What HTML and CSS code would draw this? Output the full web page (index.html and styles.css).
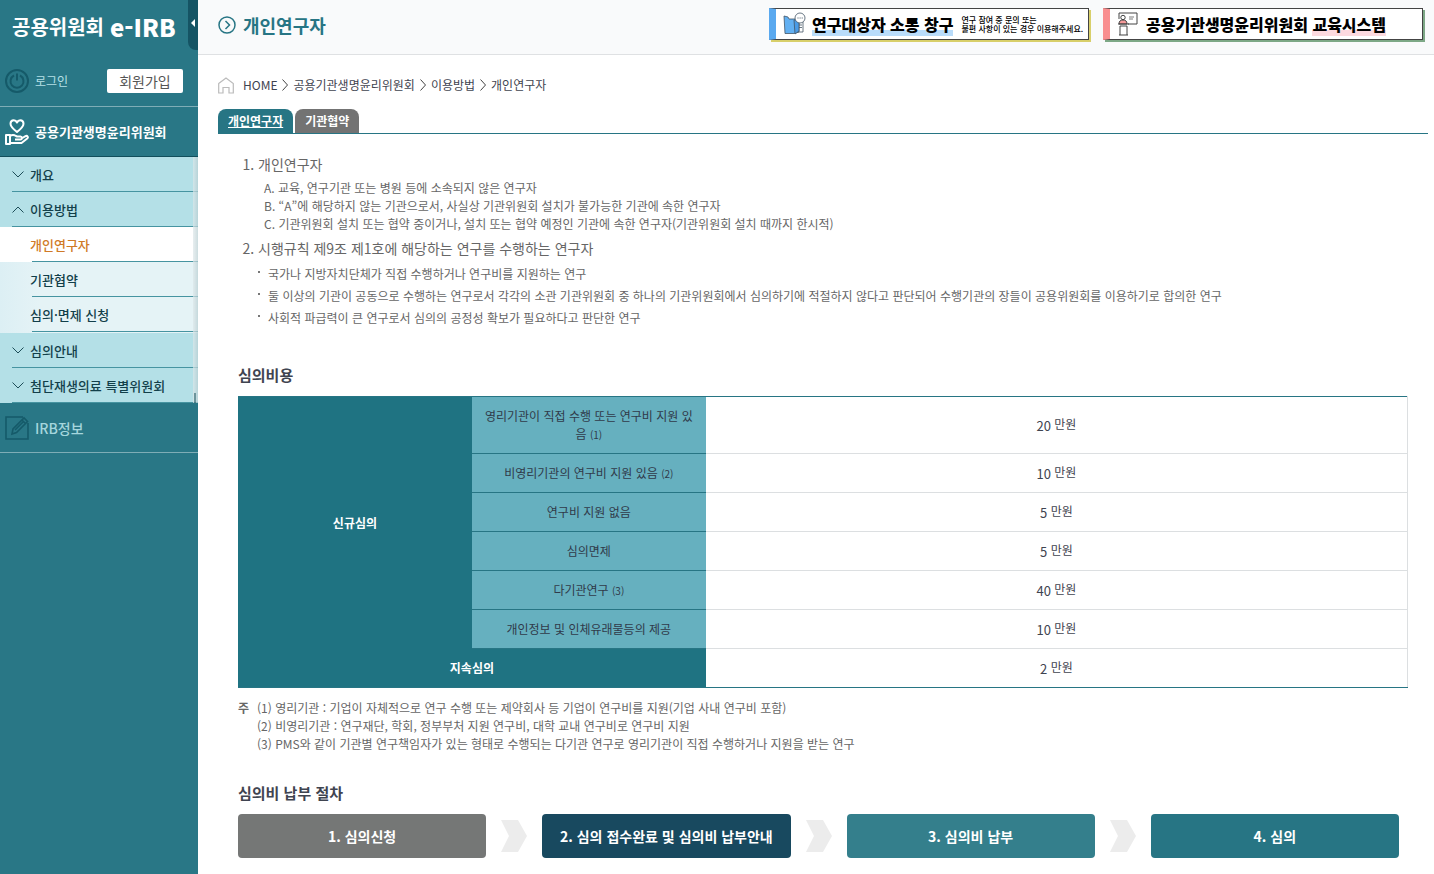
FILE: index.html
```html
<!DOCTYPE html>
<html lang="ko">
<head>
<meta charset="utf-8">
<title>개인연구자 - 공용위원회 e-IRB</title>
<link rel="stylesheet" href="styles.css">
</head>
<body>
<div class="layout">
  <aside class="sidebar">
    <a class="logo" href="#">공용위원회 <strong>e-IRB</strong></a>
    <button class="fold" type="button" aria-label="메뉴 접기"><svg width="4" height="8" viewBox="0 0 4 8"><path d="M4 0v8L0 4z" fill="#fff"/></svg></button>
    <div class="account">
      <a class="login" href="#">
        <svg width="24" height="24" viewBox="0 0 24 24" fill="none" stroke="#155a69" stroke-width="2"><circle cx="12" cy="12" r="11"/><path d="M9 6.500a6.500 6.500 0 1 0 6 0M12 4.500v7"/></svg>
        로그인</a>
      <button class="join" type="button">회원가입</button>
    </div>
    <a class="section current" href="#">
      <svg width="24" height="26" viewBox="0 0 24 26" fill="none" stroke="#fff" stroke-width="2" stroke-linejoin="round"><path d="M12 13C7.500 9.500 5.500 7.400 5.500 4.800 5.500 2.700 7 1.300 8.800 1.300c1.400 0 2.600.8 3.200 2.200.6-1.400 1.800-2.200 3.200-2.200 1.800 0 3.300 1.400 3.300 3.500 0 2.600-2 4.700-6.500 8.200z"/><path d="M1 16h4v9H1zM5 17c2-1.300 4-1.300 6 0l1 .5h3.500c1.800 0 1.800 3 0 3H10M16.500 19.500l4-2.300c1.800-1 3.200 1 1.700 2.300L16.500 24H5"/></svg>
      공용기관생명윤리위원회</a>
    <nav class="menu">
      <a class="item" href="#"><svg class="chev" viewBox="0 0 12 7"><path d="M.5.500 6 6 11.500.500"/></svg>개요</a>
      <a class="item" href="#"><svg class="chev" viewBox="0 0 12 7"><path d="M.5 6.500 6 1l5.500 5.500"/></svg>이용방법</a>
      <div class="submenu">
        <a class="item active" href="#">개인연구자</a>
        <a class="item" href="#">기관협약</a>
        <a class="item" href="#">심의·면제 신청</a>
      </div>
      <a class="item" href="#"><svg class="chev" viewBox="0 0 12 7"><path d="M.5.500 6 6 11.500.500"/></svg>심의안내</a>
      <a class="item" href="#"><svg class="chev" viewBox="0 0 12 7"><path d="M.5.500 6 6 11.500.500"/></svg>첨단재생의료 특별위원회</a>
      <span class="track"></span>
    </nav>
    <a class="section info" href="#">
      <svg width="24" height="24" viewBox="0 0 24 24" fill="none" stroke="#155a69" stroke-width="1.600"><path d="M18 1H1v22h22V7"/><path d="M7 18l1-5L19 2l3.500 3.500-11 11zM17 4l3.500 3.500M10 14l8-8"/></svg>
      IRB정보</a>
  </aside>

  <div class="page">
    <header class="topbar">
      <h1><svg width="18" height="18" viewBox="0 0 18 18" fill="none" stroke="#277584" stroke-width="1.500"><circle cx="9" cy="9" r="8"/><path d="M7.500 5l4 4-4 4"/></svg>개인연구자</h1>
      <div class="banners">
        <a class="banner blue" href="#">
          <svg width="24" height="24" viewBox="0 0 24 24" stroke="#456" stroke-width=".8"><path d="M12 7h8v13h-7z" fill="#fff"/><path d="M15 13h4M15 15.500h4" fill="none"/><path d="M1 4l4 1 1 2h10v13l-5 1.500H2z" fill="#62b0f2"/><path d="M11 8l5-1v12l-4 3z" fill="#4a9be6"/><circle cx="17" cy="6" r="5" fill="#fff"/><path d="M14.500 6h1M16.600 6h1M18.700 6h1" stroke-width="1"/></svg>
          <strong><mark>연구대상자 소통 창구</mark></strong>
          <small><span>연구 참여 중 문의 또는</span><span>불편 사항이 있는 경우 이용해주세요.</span></small>
        </a>
        <a class="banner pink" href="#">
          <svg width="22" height="24" viewBox="0 0 22 24" fill="none" stroke="#444" stroke-width="1"><path d="M2 7V1h18v11h-9"/><path d="M12 5h5M12 7h4" stroke-width=".7"/><circle cx="6" cy="5.500" r="2.200" fill="#fff"/><path d="M2 12c0-3 1.500-4 4-4s4 1 4 4z" fill="#f79a9a"/><path d="M1 12h11M3 14h7M3 14v9M10 14v9M2 23h9"/></svg>
          <strong>공용기관생명윤리위원회 <mark>교육시스템</mark></strong>
        </a>
      </div>
    </header>

    <main class="main">
      <nav class="crumbs" aria-label="현재 위치">
        <svg class="home" viewBox="0 0 16 17" fill="none" stroke="#bbb" stroke-width="1.200"><path d="M.7 6.500 8 1l7.300 5.500V16H11v-5.500H5V16H.7z"/></svg>
        <a href="#">HOME</a><svg class="sep" viewBox="0 0 6 12"><path d="M.5.500 5.500 6l-5 5.500"/></svg>
        <a href="#">공용기관생명윤리위원회</a><svg class="sep" viewBox="0 0 6 12"><path d="M.5.500 5.500 6l-5 5.500"/></svg>
        <a href="#">이용방법</a><svg class="sep" viewBox="0 0 6 12"><path d="M.5.500 5.500 6l-5 5.500"/></svg>
        <a href="#">개인연구자</a>
      </nav>
      <nav class="tabs"><a class="tab on" href="#">개인연구자</a><a class="tab" href="#">기관협약</a></nav>

      <div class="content">
        <ol class="targets">
          <li>개인연구자
            <ol class="letters">
              <li>교육, 연구기관 또는 병원 등에 소속되지 않은 연구자</li>
              <li>“A”에 해당하지 않는 기관으로서, 사실상 기관위원회 설치가 불가능한 기관에 속한 연구자</li>
              <li>기관위원회 설치 또는 협약 중이거나, 설치 또는 협약 예정인 기관에 속한 연구자(기관위원회 설치 때까지 한시적)</li>
            </ol>
          </li>
          <li>시행규칙 제9조 제1호에 해당하는 연구를 수행하는 연구자
            <ul class="dots">
              <li>국가나 지방자치단체가 직접 수행하거나 연구비를 지원하는 연구</li>
              <li>둘 이상의 기관이 공동으로 수행하는 연구로서 각각의 소관 기관위원회 중 하나의 기관위원회에서 심의하기에 적절하지 않다고 판단되어 수행기관의 장들이 공용위원회를 이용하기로 합의한 연구</li>
              <li>사회적 파급력이 큰 연구로서 심의의 공정성 확보가 필요하다고 판단한 연구</li>
            </ul>
          </li>
        </ol>

        <h2>심의비용</h2>
        <table class="fees">
          <colgroup><col class="c20"><col class="c20"><col></colgroup>
          <tbody>
            <tr class="tall"><th rowspan="6" scope="rowgroup">신규심의</th><th class="sub" scope="row">영리기관이 직접 수행 또는 연구비 지원 있음 <small>(1)</small></th><td><b>20</b> <span>만원</span></td></tr>
            <tr><th class="sub" scope="row">비영리기관의 연구비 지원 있음 <small>(2)</small></th><td><b>10</b> <span>만원</span></td></tr>
            <tr><th class="sub" scope="row">연구비 지원 없음</th><td><b>5</b> <span>만원</span></td></tr>
            <tr><th class="sub" scope="row">심의면제</th><td><b>5</b> <span>만원</span></td></tr>
            <tr><th class="sub" scope="row">다기관연구 <small>(3)</small></th><td><b>40</b> <span>만원</span></td></tr>
            <tr><th class="sub" scope="row">개인정보 및 인체유래물등의 제공</th><td><b>10</b> <span>만원</span></td></tr>
            <tr><th colspan="2" scope="row">지속심의</th><td><b>2</b> <span>만원</span></td></tr>
          </tbody>
        </table>
        <div class="notes">
          <b>주</b>
          <div>
            <p>(1) 영리기관 : 기업이 자체적으로 연구 수행 또는 제약회사 등 기업이 연구비를 지원(기업 사내 연구비 포함)</p>
            <p>(2) 비영리기관 : 연구재단, 학회, 정부부처 지원 연구비, 대학 교내 연구비로 연구비 지원</p>
            <p>(3) PMS와 같이 기관별 연구책임자가 있는 형태로 수행되는 다기관 연구로 영리기관이 직접 수행하거나 지원을 받는 연구</p>
          </div>
        </div>

        <h2>심의비 납부 절차</h2>
        <div class="steps">
          <div class="step gray">1. 심의신청</div>
          <svg class="arrow" viewBox="0 0 26 32"><path d="M0 0h17l9 16-9 16H0l8-16z"/></svg>
          <div class="step navy">2. 심의 접수완료 및 심의비 납부안내</div>
          <svg class="arrow" viewBox="0 0 26 32"><path d="M0 0h17l9 16-9 16H0l8-16z"/></svg>
          <div class="step light">3. 심의비 납부</div>
          <svg class="arrow" viewBox="0 0 26 32"><path d="M0 0h17l9 16-9 16H0l8-16z"/></svg>
          <div class="step teal">4. 심의</div>
        </div>
      </div>
    </main>
  </div>
</div>
</body>
</html>
```
FILE: styles.css
```css
* { box-sizing: border-box; }
body { margin: 0; font-family: "Noto Sans CJK KR", "Noto Sans", sans-serif; font-size: 12px; line-height: 18px; color: #3f4450; background: #fff; }
a { color: inherit; text-decoration: none; }
button { font: inherit; border: 0; padding: 0; cursor: pointer; }
svg { flex: none; display: block; }
h1, h2, p, ol, ul { margin: 0; padding: 0; }
.layout { display: flex; min-height: 100vh; }

.sidebar { position: relative; flex: none; width: 198px; background: #297786; color: #fff; }
.logo { display: flex; align-items: center; gap: 6px; height: 56px; padding: 0 0 2px 12px; font-size: 20px; font-weight: 700; }
.logo strong { font-size: 24px; font-weight: 900; }
.fold { position: absolute; top: 0; right: 0; width: 10px; height: 50px; padding: 0 0 5px 3px; background: #155464; border-radius: 0 0 0 8px; }
.account { display: flex; align-items: center; justify-content: space-between; height: 51px; padding: 0 15px 0 5px; border-bottom: 1px solid #7fadb6; }
.login { display: flex; align-items: center; gap: 6px; color: #b5e0e6; }
.join { width: 76px; height: 24px; background: #fff; border-radius: 2px; font-size: 14px; color: #555; }
.section { display: flex; align-items: center; gap: 6px; height: 50px; padding-left: 5px; font-size: 14px; font-weight: 500; }
.current { border-bottom: 1px solid #124f5c; font-size: 13px; font-weight: 700; }
.info { color: #a5d6dd; border-bottom: 1px solid #7fadb6; }
.menu { position: relative; background: #b4e0e7; color: #123f4a; font-size: 13px; font-weight: 500; }
.item { position: relative; display: flex; align-items: center; height: 35px; padding-top: 1px; margin-left: 12px; border-bottom: 1px solid #4694a1; }
.chev { width: 12px; height: 7px; margin-right: 6px; fill: none; stroke: #1d4d58; stroke-width: 1; }
.submenu { background: linear-gradient(90deg, #dceff4, #e5f3f6 40px); padding-bottom: 1px; }
.submenu .item { margin-left: 0; padding-left: 30px; border-bottom: 0; }
.submenu .item::after { content: ""; position: absolute; left: 32px; right: 0; bottom: 0; height: 1px; background: #4694a1; }
.submenu .active { background: #fff; color: #d07a27; }
.track { position: absolute; top: 0; right: 0; bottom: 0; width: 5px; background: linear-gradient(#4f757c, #4f757c) 1px 100% / 2px 10px no-repeat, linear-gradient(90deg, #dfe8ea, #b9cfd3); opacity: .7; }

.page { flex: 1; min-width: 0; }
.topbar { display: flex; align-items: center; justify-content: space-between; height: 55px; padding: 0 11px 4px 20px; background: #f9fafb; border-bottom: 1px solid #dfe1e3; }
h1 { display: flex; align-items: center; gap: 7px; font-size: 18px; line-height: 26px; font-weight: 700; color: #277584; }
.banners { display: flex; gap: 14px; padding-bottom: 2px; }
.banner { display: flex; align-items: center; height: 32px; width: 320px; background: #fff; border: 1px solid #444; color: #000; box-shadow: 2px 2px 0 #d8cf6a; }
.banner strong { font-size: 16px; font-weight: 900; line-height: 18px; white-space: nowrap; }
.banner mark { color: inherit; background: linear-gradient(transparent 75%, #b9dcfa 75%); }
.banner small { display: grid; margin-left: 8px; font-size: 8px; line-height: 9px; font-weight: 500; white-space: nowrap; }
.banner svg { margin: 0 5px 0 7px; }
.blue { border-left: 7px solid #5aa9ef; }
.pink { border-left: 7px solid #f98f90; box-shadow: 2px 2px 0 #7da886; }
.pink mark { background: linear-gradient(transparent 75%, #fcd9df 75%); }
.pink svg { margin-right: 7px; }

.main { padding: 21px 6px 16px 20px; }
.crumbs { display: flex; align-items: center; height: 18px; gap: 5px; }
.home { width: 16px; height: 17px; margin-right: 4px; }
.sep { width: 6px; height: 12px; fill: none; stroke: #444; stroke-width: 1; }
.tabs { display: flex; gap: 2px; margin-top: 15px; border-bottom: 1px solid #277584; }
.tab { height: 24px; padding: 0 10px; border-radius: 8px 8px 0 0; background: #737373; color: #fff; font-weight: 700; line-height: 24px; }
.on { background: #277584; text-decoration: underline; }
.content { padding: 19px 20px 0; }
.targets { padding-left: 20px; font-size: 14px; line-height: 22px; color: #666; }
.letters { list-style: upper-alpha inside; padding-left: 6px; margin: 4px 0; font-size: 12px; line-height: 18px; }
.targets > li::marker { font-size: 14px; }
.dots { list-style: none; margin-top: 4px; font-size: 12px; line-height: 22px; }
.dots li { display: flex; padding-left: 10px; }
.dots li::before { content: ""; width: 2px; height: 2px; margin: 8px 8px 0 -10px; background: #777; }
h2 { font-size: 15px; line-height: 22px; font-weight: 700; }
.targets + h2 { margin-top: 35px; }
.fees { width: 100%; margin-top: 10px; table-layout: fixed; border-collapse: collapse; border-top: 1px solid #277584; border-bottom: 1px solid #277584; border-right: 1px solid #dcdfe1; text-align: center; }
.c20 { width: 20%; }
.fees th, .fees td { height: 39px; padding: 0 12px; }
.fees .tall td { height: 57px; }
.fees th { background: #1f7382; color: #fff; font-weight: 700; }
.fees .sub { background: #66b0bf; color: #303a4a; font-weight: 400; border-bottom: 1px solid #277584; word-break: break-all; }
.fees td { border-bottom: 1px solid #dcdfe1; }
.fees tr:last-child td { border-bottom-color: #277584; }
.fees small { font-size: 10px; line-height: 10px; }
.fees b { font-size: 13px; font-weight: 400; vertical-align: middle; }
.notes { display: flex; gap: 8px; margin-top: 11px; color: #666; }
.notes b { font-weight: 700; }
.notes + h2 { margin-top: 29px; }
.steps { display: flex; align-items: center; margin: 10px 9px 0 0; }
.step { flex: 1 1 0; height: 44px; border-radius: 4px; color: #fff; font-size: 14px; font-weight: 700; line-height: 44px; text-align: center; white-space: nowrap; }
.arrow { width: 26px; height: 32px; margin: 0 15px; fill: #ececec; }
.gray { background: #757776; }
.navy { background: #18495f; }
.light { background: #347f8c; }
.teal { background: #277584; }
```
